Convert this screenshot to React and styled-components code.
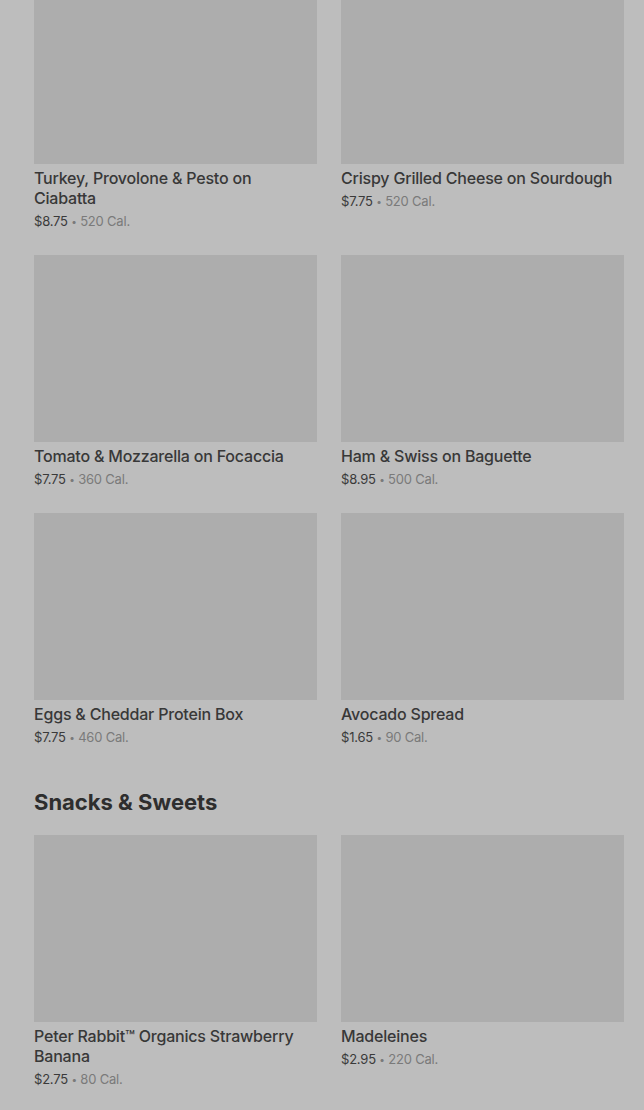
import styled, { createGlobalStyle } from "styled-components";

const GlobalStyle = createGlobalStyle`
  html, body {
    margin: 0;
    padding: 0;
    background-color: #bdbdbd;
    font-family: Inter, "Noto Sans", sans-serif;
    overflow: hidden;
  }
`;

const Page = styled.div`
  width: 644px;
  height: 1110px;
  overflow: hidden;
  background-color: #bdbdbd;
`;

const Content = styled.div`
  margin-top: -23px;
  padding: 0 20px 0 34px;
`;

const Section = styled.section`
  margin-bottom: 41px;
`;

const SectionTitle = styled.h2`
  margin: 0 0 19px;
  font-size: 22px;
  line-height: 28px;
  font-weight: 700;
  color: #2e2e2e;
  letter-spacing: 0;
`;

const Grid = styled.div`
  display: grid;
  grid-template-columns: 1fr 1fr;
  column-gap: 24px;
  row-gap: 24px;
`;

const Card = styled.div`
  display: flex;
  flex-direction: column;
`;

const Thumb = styled.div`
  height: 187px;
  background-color: #adadad;
`;

const Name = styled.div`
  margin-top: 4px;
  font-size: 16px;
  line-height: 20px;
  font-weight: 500;
  color: #383838;
  letter-spacing: -0.2px;
`;

const Meta = styled.div`
  margin-top: 3px;
  height: 20px;
  font-size: 13px;
  line-height: 20px;
  color: #7a7a7a;
  letter-spacing: -0.2px;
`;

const Price = styled.span`
  color: #3a3a3a;
`;

const Dot = styled.span`
  font-size: 10px;
  line-height: 0;
  vertical-align: 1px;
`;

const sandwiches = [
  { name: "Turkey, Provolone & Pesto on Ciabatta", price: "$8.75", cal: "520 Cal." },
  { name: "Crispy Grilled Cheese on Sourdough", price: "$7.75", cal: "520 Cal." },
  { name: "Tomato & Mozzarella on Focaccia", price: "$7.75", cal: "360 Cal." },
  { name: "Ham & Swiss on Baguette", price: "$8.95", cal: "500 Cal." },
  { name: "Eggs & Cheddar Protein Box", price: "$7.75", cal: "460 Cal." },
  { name: "Avocado Spread", price: "$1.65", cal: "90 Cal." },
];

const snacks = [
  { name: "Peter Rabbit™ Organics Strawberry Banana", price: "$2.75", cal: "80 Cal." },
  { name: "Madeleines", price: "$2.95", cal: "220 Cal." },
];

const Item = ({ item }) => (
  <Card>
    <Thumb />
    <Name>{item.name}</Name>
    <Meta>
      <Price>{item.price}</Price> <Dot>•</Dot> {item.cal}
    </Meta>
  </Card>
);

const App = () => {
  return (
    <Page>
      <GlobalStyle />
      <Content>
        <Section>
          <Grid>
            {sandwiches.map((item) => (
              <Item key={item.name} item={item} />
            ))}
          </Grid>
        </Section>
        <Section>
          <SectionTitle>Snacks &amp; Sweets</SectionTitle>
          <Grid>
            {snacks.map((item) => (
              <Item key={item.name} item={item} />
            ))}
          </Grid>
        </Section>
      </Content>
    </Page>
  );
};

export default App;
